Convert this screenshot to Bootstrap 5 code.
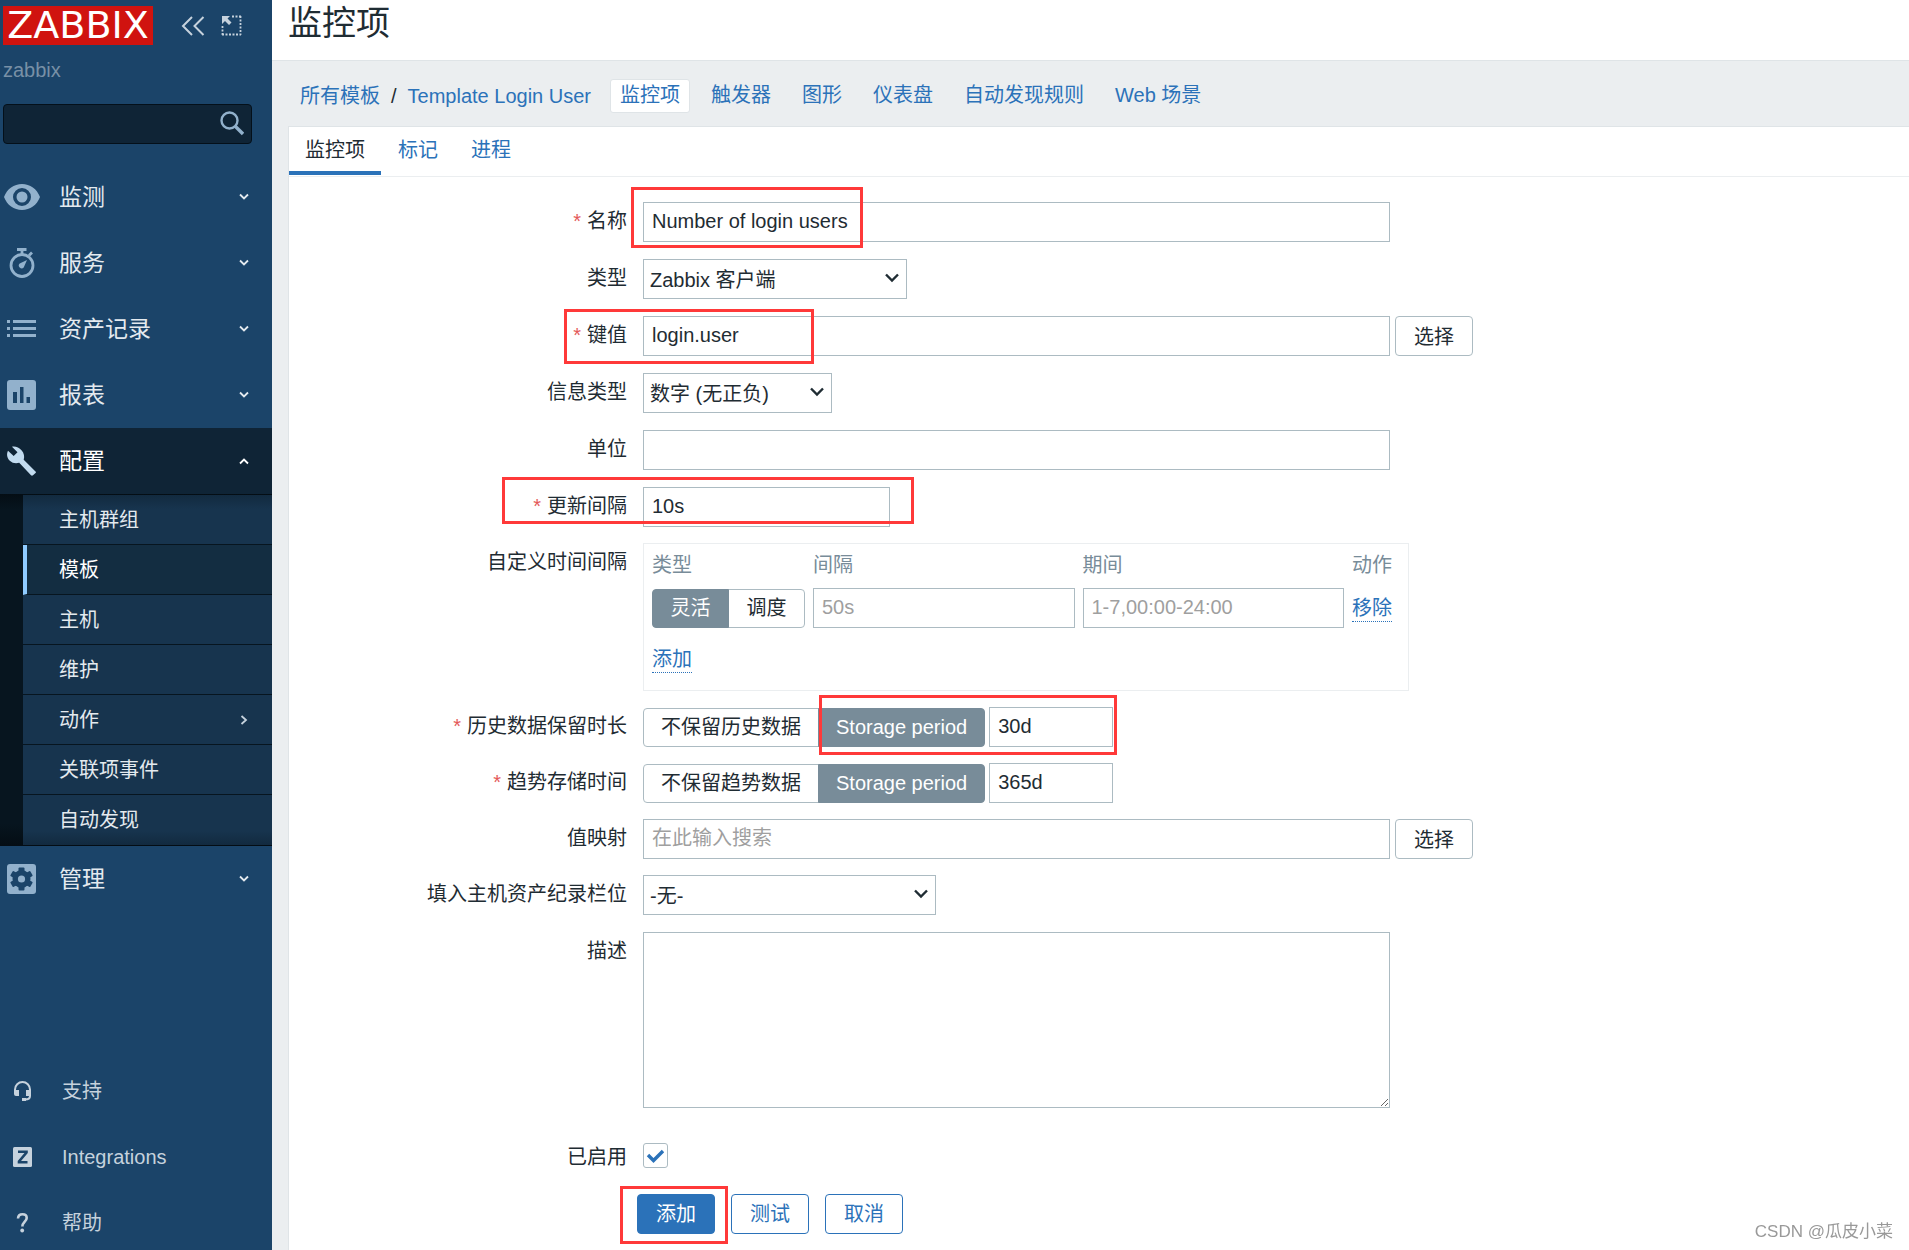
<!DOCTYPE html>
<html lang="zh-CN">
<head>
<meta charset="utf-8">
<meta name="viewport" content="width=device-width, initial-scale=1">
<title>监控项</title>
<link rel="stylesheet" href="https://cdn.jsdelivr.net/npm/bootstrap@5.3.0/dist/css/bootstrap.min.css">
<style>
:root{--zx-link:#2b72b9;--zx-line:#acbbc2;--zx-text:#1f2c33;--zx-soft:#dfe4e7;--zx-seg:#788c99}
body{font-family:"Liberation Sans","Noto Sans CJK SC",sans-serif;font-size:20px;line-height:30px;color:var(--zx-text);background:#ebeef0}
a{color:var(--zx-link);text-decoration:none}
svg{display:block;flex:none}

/* sidebar */
.side{width:272px;background:#1b4469}
.side-head{padding:6px 12px 0 3px}
.logo{background:#d0130f;color:#fff;font-family:"DejaVu Sans",sans-serif;font-size:38px;line-height:39px;width:150px;text-align:center}
.logo:hover{color:#fff}
.server{color:#7890a6;padding:10px 3px 0;line-height:30px}
.side-search{margin:19px 20px 20px 3px;position:relative}
.side-search input{height:40px;background:#0f2436;border:1px solid #04101a;border-radius:4px;color:#fff}
.side-search input:focus{background:#0f2436;color:#fff}
.side-search button{position:absolute;right:8px;top:7px;padding:0;border:0;background:none}
.menu-link{height:66px;padding:0 23px 0 4px;font-size:23px;color:#e4eaef}
.menu-link:hover{color:#fff}
.menu-link .ico{width:55px;color:#92b1cc}
.menu-link.on{background:#0f2436;color:#fff}
.menu-link.on .ico{color:#c2dbef}
.sub{margin:0;padding:1px 0 1px 23px;background:linear-gradient(#040d14,#07151f 16px,#07151f 330px,#040d14);}
.sub a{display:flex;align-items:center;justify-content:space-between;height:50px;padding:0 24px 0 36px;color:#e4eaef;background:#17344e;border-bottom:1px solid #07151f}
.sub li:first-child a{background:linear-gradient(#122a3f,#17344e 14px)}
.sub li:last-child a{border-bottom:0;background:linear-gradient(#17344e 36px,#122a3f)}
.sub a.on{background:#132d41;border-left:4px solid #8fcbff;padding-left:32px;color:#fff}
.side-foot{gap:36px;padding:0 0 12px 12px}
.side-foot a{color:#c6d2dd}
.side-foot .ico{width:50px;color:#c6d2dd}

/* head */
.page-head{height:61px;background:#fff;border-bottom:1px solid var(--zx-soft);padding:0 16px}
.page-head h1{font-size:34px;line-height:47px;margin:0;font-weight:400}
.crumbs{padding:18px 27px 13px 28px;gap:11px}
.crumbs ol{gap:11px;margin:0 8px 0 0}
.crumbs a.pill{height:34px;line-height:31px;padding:0 9px;border:1px solid transparent;border-radius:3px}
.crumbs a.pill.on{background:#fff;border-color:var(--zx-soft)}
.panel{background:#fff;border:solid var(--zx-soft);border-width:1px 0 0 1px;margin-left:16px}
.tabs{height:50px;border-bottom:1px solid #ebeef0;gap:1px}
.tabs a{height:48px;line-height:47px;padding:0 16px;border-bottom:4px solid transparent}
.tabs a.on{color:var(--zx-text);border-color:var(--zx-link)}

/* form */
.item-form{padding:25px 16px 12px 0}
.f-row{display:flex;margin-bottom:17px;min-height:40px}
.f-label{flex:0 0 354px;padding-right:16px;text-align:right;line-height:38px}
.f-label.req::before{content:"*";color:#e45959;margin-right:6px}
.f-field{position:relative;flex:1 1 0;display:flex;align-items:flex-start;min-width:0}
.form-control,.form-select{font-size:20px;line-height:30px;color:var(--zx-text);border:1px solid var(--zx-line);border-radius:0;height:40px;padding:0 8px 2px}
.form-control::placeholder{color:#9f9f9f;opacity:1}
.form-select{padding:2px 34px 0 6px;background:#fff url("data:image/svg+xml,%3Csvg xmlns='http://www.w3.org/2000/svg' width='14' height='10' fill='none' stroke='%231f2c33' stroke-width='2.4'%3E%3Cpath d='M1 1.5l6 6 6-6'/%3E%3C/svg%3E") no-repeat right 7px top 13px/14px 10px}
.wide{max-width:747px}
.btn{--bs-btn-font-size:20px;--bs-btn-line-height:30px;--bs-btn-padding-y:4px;--bs-btn-padding-x:18px;--bs-btn-border-radius:4px;height:40px}
.btn-pick{--bs-btn-color:var(--zx-text);--bs-btn-border-color:var(--zx-line);--bs-btn-bg:#fff;--bs-btn-padding-y:5px;margin-left:5px}
.btn-main{--bs-btn-color:#fff;--bs-btn-bg:var(--zx-link);--bs-btn-border-color:var(--zx-link)}
.btn-line{--bs-btn-color:var(--zx-link);--bs-btn-bg:#fff;--bs-btn-border-color:var(--zx-link)}
.btn-seg{--bs-btn-color:var(--zx-text);--bs-btn-border-color:var(--zx-line);--bs-btn-bg:#fff;--bs-btn-active-color:#fff;--bs-btn-active-bg:var(--zx-seg);--bs-btn-active-border-color:var(--zx-seg);--bs-btn-padding-y:3px;--bs-btn-padding-x:17px;min-width:77px;height:39px;white-space:nowrap;flex:none}
.seg{margin-top:1px}
.w-short{width:124px;margin-left:4px}
.intervals{border:1px solid #ebeef0;width:766px;padding:0 8px}
.intervals th{font-weight:400;color:var(--zx-seg);height:44px;padding:0 0 2px}
.intervals td{padding:0 8px 0 0;height:40px;vertical-align:middle}
.intervals td:first-child{width:161px}
.intervals td:nth-child(4){width:48px}
.intervals tfoot td{height:62px}
.dotted{border-bottom:1px dotted var(--zx-link);line-height:25px;display:inline-block}
textarea.form-control{height:176px}
.form-check-input.big{width:25px;height:25px;margin:0;border:1px solid var(--zx-line);border-radius:3px;background-size:19px}
.form-check-input.big:checked{background-color:#fff;background-image:url("data:image/svg+xml,%3Csvg xmlns='http://www.w3.org/2000/svg' viewBox='0 0 19 19' fill='none' stroke='%232b72b9' stroke-width='3.4'%3E%3Cpath d='M2 9l5.500 5.500L17 5'/%3E%3C/svg%3E")}
.lower .f-row{margin-bottom:16px}
.lower .f-row.desc-row{margin-top:17px}
.lower .enabled-row{margin:35px 0 0;min-height:25px}
.enabled-row .f-label{line-height:29px}
.enabled-row .f-field{height:25px}
.actions{position:relative;display:flex;gap:16px;margin:22px 0 0 348px}

/* red callouts drawn over the form */
.callout{position:absolute;border:3px solid #ff3939;pointer-events:none;z-index:6}
.c-name{left:-12px;top:-15px;width:232px;height:61px}
.c-key{left:-79px;top:-7px;width:250px;height:55px}
.c-update{left:-141px;top:-10px;width:412px;height:47px}
.c-history{left:176px;top:-12px;width:298px;height:60px}
.c-add{left:-17px;top:-8px;width:108px;height:58px}
.watermark{position:fixed;right:16px;bottom:4px;font-size:17px;line-height:28px;color:#999}
</style>
<script src="https://cdn.jsdelivr.net/npm/bootstrap@5.3.0/dist/js/bootstrap.bundle.min.js"></script>
</head>
<body>
<svg width="0" height="0" class="position-absolute" aria-hidden="true">
  <symbol id="down" viewBox="0 0 10 8"><path d="M1 1.500l4 4 4-4" fill="none" stroke="currentColor" stroke-width="1.800"/></symbol>
</svg>
<div class="d-flex min-vh-100">
  <aside class="side d-flex flex-column flex-shrink-0">
    <div class="side-head d-flex align-items-center">
      <a class="logo" href="#">ZABBIX</a>
      <a href="#" class="ms-4 ps-1" aria-label="收起"><svg width="24" height="20" viewBox="0 0 24 20" fill="none" stroke="#c6d2dd" stroke-width="2"><path d="M11 1L2 10l9 9M22.500 1l-9 9 9 9"/></svg></a>
      <a href="#" class="ms-3" aria-label="隐藏"><svg width="21" height="21" viewBox="0 0 21 21"><path d="M11 1.500h9M19.500 1v19M1.500 11v9M1 19.500h19" fill="none" stroke="#c6d2dd" stroke-width="1.800" stroke-dasharray="2 1.500"/><path d="M1 1h8L6.500 3.500l4 4-2.500 2.500-4-4L1 9z" fill="#c6d2dd"/></svg></a>
    </div>
    <div class="server">zabbix</div>
    <form class="side-search">
      <input class="form-control" type="text" aria-label="搜索">
      <button type="button" aria-label="搜索"><svg width="24" height="25" viewBox="0 0 24 25" fill="none" stroke="#92b1cc"><circle cx="9.500" cy="9.500" r="8" stroke-width="2.400"/><path d="M15 15l8 8" stroke-width="3.400"/></svg></button>
    </form>
    <nav>
      <a class="menu-link d-flex align-items-center" href="#"><span class="ico"><svg width="36" height="26" viewBox="0 0 36 26"><path fill="currentColor" fill-rule="evenodd" d="M18 0C10 0 3 5 0 13c3 8 10 13 18 13s15-5 18-13C33 5 26 0 18 0zm0 22a9 9 0 110-18 9 9 0 010 18zm0-3.500a5.500 5.500 0 100-11 5.500 5.500 0 000 11z"/></svg></span><span class="flex-grow-1">监测</span><svg width="10" height="8"><use href="#down"/></svg></a>
      <a class="menu-link d-flex align-items-center" href="#"><span class="ico"><svg width="36" height="30" viewBox="0 0 36 30" fill="none" stroke="currentColor"><circle cx="18" cy="17.500" r="11" stroke-width="2.800"/><path d="M13 1.500h9.500M18 2v4M25 7.500l3-3" stroke-width="2.800"/><path d="M23 12l-3.300 7.500a2.800 2.800 0 11-4-4z" fill="currentColor" stroke="none"/></svg></span><span class="flex-grow-1">服务</span><svg width="10" height="8"><use href="#down"/></svg></a>
      <a class="menu-link d-flex align-items-center" href="#"><span class="ico"><svg width="36" height="18" viewBox="0 0 36 18"><path fill="currentColor" d="M3 0h3v3H3zM9 0h23v3H9zM3 7h3v3H3zM9 7h23v3H9zM3 14h3v3H3zM9 14h23v3H9z"/></svg></span><span class="flex-grow-1">资产记录</span><svg width="10" height="8"><use href="#down"/></svg></a>
      <a class="menu-link d-flex align-items-center" href="#"><span class="ico"><svg width="36" height="30" viewBox="0 0 36 30"><path fill="currentColor" fill-rule="evenodd" d="M6 0h23a3 3 0 013 3v24a3 3 0 01-3 3H6a3 3 0 01-3-3V3a3 3 0 013-3zm3 12v11h4V12zm7-5v16h3.500V7zm6.500 10v6H26v-6z"/></svg></span><span class="flex-grow-1">报表</span><svg width="10" height="8"><use href="#down"/></svg></a>
      <a class="menu-link on d-flex align-items-center" href="#"><span class="ico"><svg width="36" height="30" viewBox="0 0 36 30"><path fill="currentColor" d="M31.500 25.500L19.700 13.700c1-3 .3-6.600-2-9.200C15 1.500 11.500 0 8 .7l5.500 5.600-3.800 3.800L4 4.700C2.300 8 3 12 5.800 14.700c2.600 2.500 6.200 3 9.400 2L27 29.300c.6.600 1.400.6 2 0l2.500-2.200c.6-.5.6-1.200 0-1.600z"/></svg></span><span class="flex-grow-1">配置</span><svg width="10" height="8" viewBox="0 0 10 8"><path d="M1 6.500l4-4 4 4" fill="none" stroke="currentColor" stroke-width="1.800"/></svg></a>
      <ul class="sub list-unstyled">
        <li><a href="#">主机群组</a></li>
        <li><a href="#" class="on">模板</a></li>
        <li><a href="#">主机</a></li>
        <li><a href="#">维护</a></li>
        <li><a href="#">动作<svg width="8" height="10" viewBox="0 0 8 10"><path d="M1.500 1l4.500 4-4.500 4" fill="none" stroke="#c6d2dd" stroke-width="1.800"/></svg></a></li>
        <li><a href="#">关联项事件</a></li>
        <li><a href="#">自动发现</a></li>
      </ul>
      <a class="menu-link d-flex align-items-center" href="#"><span class="ico"><svg width="36" height="30" viewBox="0 0 36 30"><rect x="3" width="29" height="30" rx="3" fill="currentColor"/><g fill="#1b4469"><circle cx="17.500" cy="15" r="9"/><g id="tooth"><rect x="14.500" y="3.500" width="6" height="23" rx="1"/></g><use href="#tooth" transform="rotate(60 17.500 15)"/><use href="#tooth" transform="rotate(120 17.500 15)"/></g><circle cx="17.500" cy="15" r="3.600" fill="currentColor"/></svg></span><span class="flex-grow-1">管理</span><svg width="10" height="8"><use href="#down"/></svg></a>
    </nav>
    <nav class="side-foot d-flex flex-column mt-auto">
      <a class="d-flex align-items-center" href="#"><span class="ico"><svg width="20" height="22" viewBox="0 0 20 22"><path d="M3 11V9.500a7.500 7.500 0 0115 0V16c0 2-2 3.500-5 3.500" fill="none" stroke="currentColor" stroke-width="2"/><path fill="currentColor" d="M2 10h5v6H4a2 2 0 01-2-2zM14 10h5v6h-5zM10 18h4v3h-4z"/></svg></span>支持</a>
      <a class="d-flex align-items-center" href="#"><span class="ico"><svg width="20" height="20" viewBox="0 0 20 20"><rect x="1" width="19" height="20" rx="1.500" fill="currentColor"/><path d="M6 4.800h8.500v.7L7 14.500v.7h8.500" fill="none" stroke="#1b4469" stroke-width="2.600"/></svg></span>Integrations</a>
      <a class="d-flex align-items-center" href="#"><span class="ico"><svg width="20" height="20" viewBox="0 0 20 20"><path d="M6 5.500C6.200 2.500 8 1.300 10.500 1.300c2.700 0 4.200 1.500 4.200 3.700 0 3.500-4.300 4-4.300 8.500" fill="none" stroke="currentColor" stroke-width="2.600"/><circle cx="10.200" cy="17.500" r="1.900" fill="currentColor"/></svg></span>帮助</a>
    </nav>
  </aside>

  <main class="flex-grow-1 d-flex flex-column">
    <header class="page-head"><h1>监控项</h1></header>
    <nav class="crumbs d-flex flex-wrap">
      <ol class="list-unstyled d-flex align-items-center">
        <li><a href="#">所有模板</a></li><li>/</li><li><a href="#">Template Login User</a></li>
      </ol>
      <a class="pill on" href="#">监控项</a>
      <a class="pill" href="#">触发器</a>
      <a class="pill" href="#">图形</a>
      <a class="pill" href="#">仪表盘</a>
      <a class="pill" href="#">自动发现规则</a>
      <a class="pill" href="#">Web 场景</a>
    </nav>
    <section class="panel flex-grow-1">
      <nav class="tabs d-flex">
        <a class="on" href="#">监控项</a><a href="#">标记</a><a href="#">进程</a>
      </nav>
      <form class="item-form">
        <div class="f-row"><label class="f-label req" for="name">名称</label>
          <div class="f-field"><input id="name" class="form-control wide" type="text" value="Number of login users"><span class="callout c-name"></span></div></div>
        <div class="f-row"><label class="f-label" for="type">类型</label>
          <div class="f-field"><select id="type" class="form-select" style="width:264px"><option>Zabbix 客户端</option></select></div></div>
        <div class="f-row"><label class="f-label req" for="key">键值</label>
          <div class="f-field"><input id="key" class="form-control wide" type="text" value="login.user"><button type="button" class="btn btn-pick flex-shrink-0">选择</button><span class="callout c-key"></span></div></div>
        <div class="f-row"><label class="f-label" for="vtype">信息类型</label>
          <div class="f-field"><select id="vtype" class="form-select" style="width:189px"><option>数字 (无正负)</option></select></div></div>
        <div class="f-row"><label class="f-label" for="units">单位</label>
          <div class="f-field"><input id="units" class="form-control wide" type="text"></div></div>
        <div class="f-row mb-3"><label class="f-label req" for="delay">更新间隔</label>
          <div class="f-field"><input id="delay" class="form-control" style="width:247px" type="text" value="10s"><span class="callout c-update"></span></div></div>
        <div class="f-row mb-3"><div class="f-label">自定义时间间隔</div>
          <div class="f-field"><div class="intervals"><table class="w-100">
            <thead><tr><th>类型</th><th>间隔</th><th>期间</th><th>动作</th></tr></thead>
            <tbody><tr>
              <td><div class="btn-group seg"><input class="btn-check" type="radio" name="it" id="it1" checked><label class="btn btn-seg" for="it1">灵活</label><input class="btn-check" type="radio" name="it" id="it2"><label class="btn btn-seg" for="it2">调度</label></div></td>
              <td><input class="form-control" type="text" placeholder="50s" aria-label="间隔"></td>
              <td><input class="form-control" type="text" placeholder="1-7,00:00-24:00" aria-label="期间"></td>
              <td><a class="dotted" href="#">移除</a></td></tr></tbody>
            <tfoot><tr><td colspan="4"><a class="dotted" href="#">添加</a></td></tr></tfoot>
          </table></div></div></div>
        <div class="lower">
        <div class="f-row"><label class="f-label req" for="history">历史数据保留时长</label>
          <div class="f-field"><div class="btn-group seg"><input class="btn-check" type="radio" name="hm" id="hm1"><label class="btn btn-seg" for="hm1">不保留历史数据</label><input class="btn-check" type="radio" name="hm" id="hm2" checked><label class="btn btn-seg" for="hm2">Storage period</label></div><input id="history" class="form-control w-short" type="text" value="30d"><span class="callout c-history"></span></div></div>
        <div class="f-row"><label class="f-label req" for="trends">趋势存储时间</label>
          <div class="f-field"><div class="btn-group seg"><input class="btn-check" type="radio" name="tm" id="tm1"><label class="btn btn-seg" for="tm1">不保留趋势数据</label><input class="btn-check" type="radio" name="tm" id="tm2" checked><label class="btn btn-seg" for="tm2">Storage period</label></div><input id="trends" class="form-control w-short" type="text" value="365d"></div></div>
        <div class="f-row"><label class="f-label" for="vmap">值映射</label>
          <div class="f-field"><input id="vmap" class="form-control wide" type="text" placeholder="在此输入搜索"><button type="button" class="btn btn-pick flex-shrink-0">选择</button></div></div>
        <div class="f-row"><label class="f-label" for="inv">填入主机资产纪录栏位</label>
          <div class="f-field"><select id="inv" class="form-select" style="width:293px"><option>-无-</option></select></div></div>
        <div class="f-row desc-row"><label class="f-label" for="desc">描述</label>
          <div class="f-field"><textarea id="desc" class="form-control wide"></textarea></div></div>
        <div class="f-row enabled-row"><label class="f-label" for="on">已启用</label>
          <div class="f-field"><input id="on" class="form-check-input big" type="checkbox" checked></div></div>
        </div>
        <div class="actions"><button type="button" class="btn btn-main">添加</button><button type="button" class="btn btn-line">测试</button><button type="button" class="btn btn-line">取消</button><span class="callout c-add"></span></div>
      </form>
    </section>
  </main>
</div>
<div class="watermark">CSDN @瓜皮小菜</div>
</body>
</html>
